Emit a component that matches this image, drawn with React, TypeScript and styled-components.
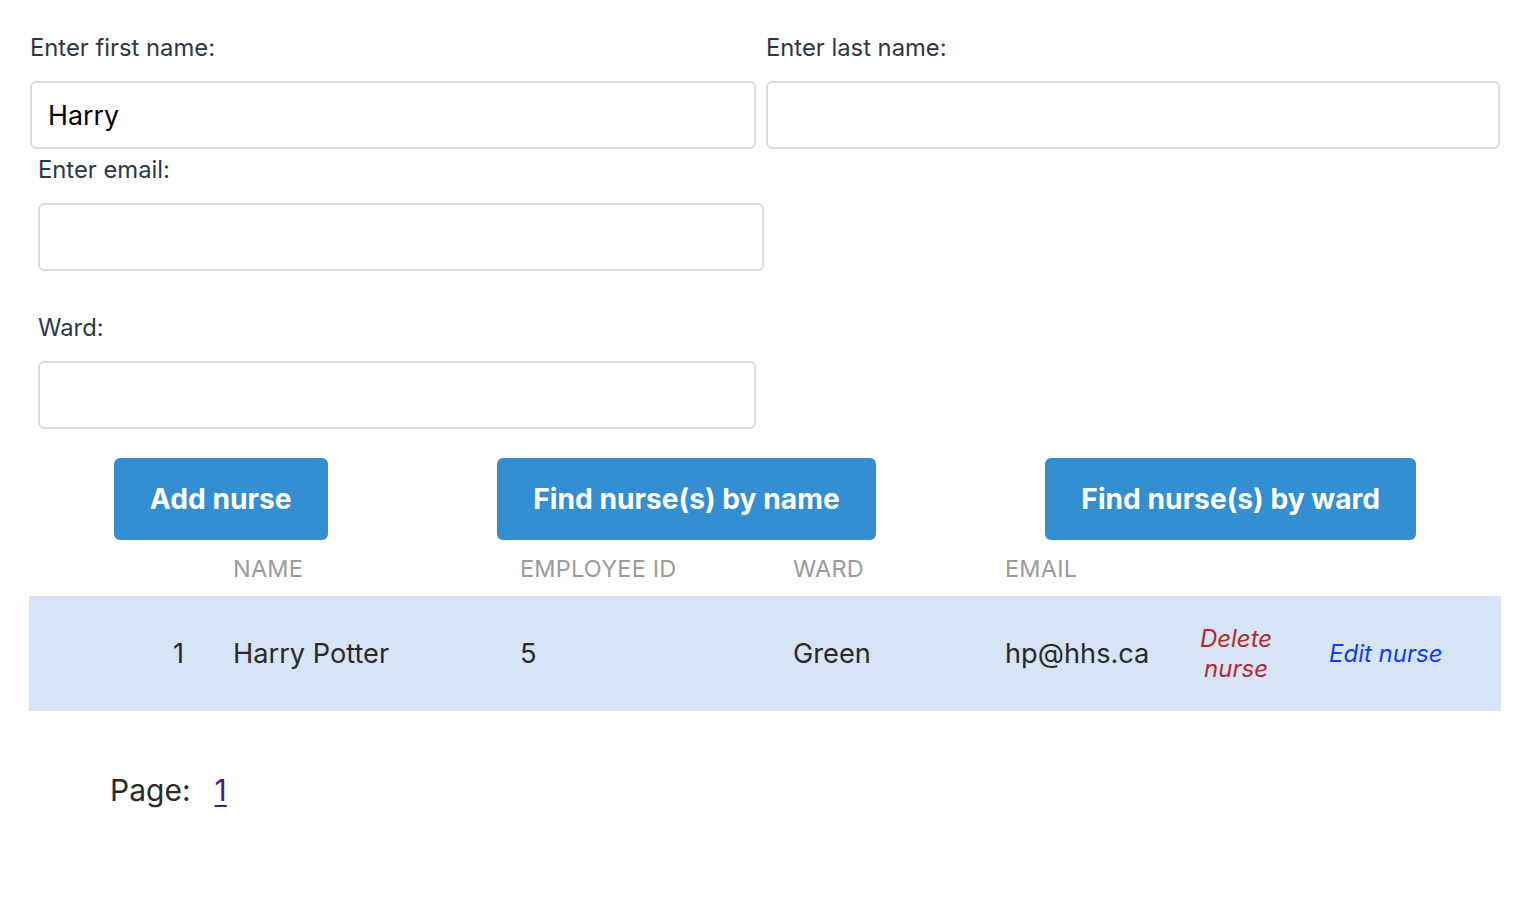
import React from "react";
import styled, { createGlobalStyle } from "styled-components";

const GlobalStyle = createGlobalStyle`
  html, body { margin: 0; padding: 0; background: #ffffff; }
  body { font-family: Inter, "Noto Sans", "Liberation Sans", sans-serif; }
  * { box-sizing: border-box; }
`;

const Page = styled.div`
  width: 1528px;
  padding-top: 32px;
`;

const NameRow = styled.div`
  display: grid;
  grid-template-columns: 726px 734px;
  column-gap: 10px;
  padding-left: 30px;
`;

const Field = styled.div<{ $indent?: number; $width?: number; $top?: number }>`
  display: flex;
  flex-direction: column;
  margin-left: ${(p) => p.$indent ?? 0}px;
  margin-top: ${(p) => p.$top ?? 0}px;
  width: ${(p) => (p.$width ? `${p.$width}px` : "auto")};
`;

const Label = styled.label`
  display: block;
  font-size: 23.8px;
  line-height: 32px;
  color: #2d3748;
  margin-bottom: 17px;
`;

const Input = styled.input`
  height: 68px;
  width: 100%;
  border: 2px solid #dcdcdc;
  border-radius: 6px;
  padding: 0 16px;
  font-family: inherit;
  font-size: 26.8px;
  color: #000;
  background: #fff;
  outline: none;
`;

const ButtonRow = styled.div`
  display: flex;
  justify-content: space-around;
  margin: 29px 27px 0 29px;
`;

const Button = styled.button`
  height: 82px;
  padding: 0 36px;
  border: none;
  border-radius: 6px;
  background: #338ed2;
  color: #fff;
  font-family: inherit;
  font-weight: 700;
  font-size: 28.2px;
  cursor: pointer;
`;

const Table = styled.div`
  margin: 0 27px 0 29px;
`;

const cols = "180px 287px 273px 212px 195px 120px 1fr";

const HeadRow = styled.div`
  display: grid;
  grid-template-columns: ${cols};
  height: 56px;
  align-items: center;
`;

const HeadCell = styled.div`
  padding-left: 24px;
  font-size: 23.5px;
  color: #9b9b9b;
  text-transform: uppercase;
  letter-spacing: 0.2px;
`;

const DataRow = styled.div`
  display: grid;
  grid-template-columns: ${cols};
  height: 115px;
  align-items: center;
  background: #d6e4f6;
`;

const Cell = styled.div`
  padding-left: 24px;
  font-size: 27.2px;
  color: #2a2a2a;
`;

const IndexCell = styled(Cell)`
  padding: 0 25px 0 0;
  text-align: right;
`;

const ActionCell = styled.div<{ $pad: string; $center?: boolean }>`
  padding: ${(p) => p.$pad};
  text-align: ${(p) => (p.$center ? "center" : "left")};
`;

const ActionLink = styled.a<{ $color: string }>`
  font-style: italic;
  font-size: 24px;
  line-height: 30px;
  color: ${(p) => p.$color};
  text-decoration: none;
  cursor: pointer;
`;

const Pager = styled.div`
  display: flex;
  align-items: center;
  gap: 24px;
  margin: 61px 0 0 110px;
  font-size: 30px;
  line-height: 36px;
  color: #2a2a2a;
`;

const PageLink = styled.a`
  color: #4b1a87;
  text-decoration: underline;
  text-underline-offset: 4px;
  text-decoration-thickness: 2px;
`;

export default function App() {
  return (
    <>
      <GlobalStyle />
      <Page>
        <NameRow>
          <Field>
            <Label>Enter first name:</Label>
            <Input defaultValue="Harry" />
          </Field>
          <Field>
            <Label>Enter last name:</Label>
            <Input />
          </Field>
        </NameRow>
        <Field $indent={38} $width={726} $top={5}>
          <Label>Enter email:</Label>
          <Input />
        </Field>
        <Field $indent={38} $width={718} $top={41}>
          <Label>Ward:</Label>
          <Input />
        </Field>
        <ButtonRow>
          <Button>Add nurse</Button>
          <Button>Find nurse(s) by name</Button>
          <Button>Find nurse(s) by ward</Button>
        </ButtonRow>
        <Table>
          <HeadRow>
            <HeadCell />
            <HeadCell>Name</HeadCell>
            <HeadCell>Employee ID</HeadCell>
            <HeadCell>Ward</HeadCell>
            <HeadCell>Email</HeadCell>
            <HeadCell />
            <HeadCell />
          </HeadRow>
          <DataRow>
            <IndexCell>1</IndexCell>
            <Cell>Harry Potter</Cell>
            <Cell>5</Cell>
            <Cell>Green</Cell>
            <Cell>hp@hhs.ca</Cell>
            <ActionCell $pad="0 12px" $center>
              <ActionLink $color="#b22b2b">Delete nurse</ActionLink>
            </ActionCell>
            <ActionCell $pad="0 0 0 33px">
              <ActionLink $color="#0b3ff5">Edit nurse</ActionLink>
            </ActionCell>
          </DataRow>
        </Table>
        <Pager>
          <span>Page:</span>
          <PageLink href="#">1</PageLink>
        </Pager>
      </Page>
    </>
  );
}
